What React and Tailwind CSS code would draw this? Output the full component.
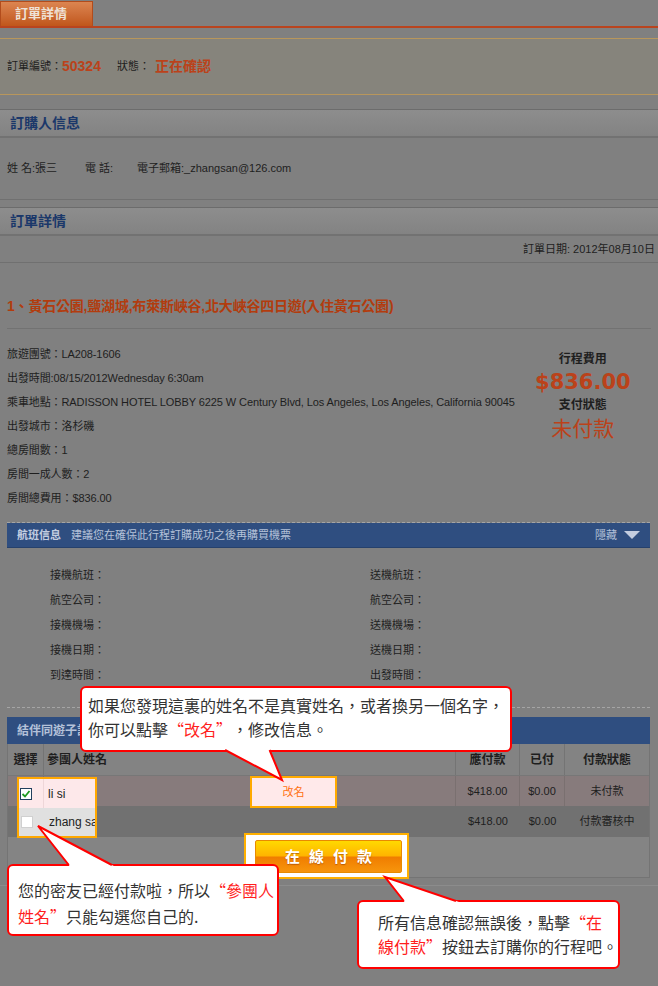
import React from 'react';

const tails = [
  { a: [227, 751], b: [270, 751], t: [282, 780] },
  { a: [68, 864], b: [110, 864], t: [38, 826] },
  { a: [403, 900], b: [453, 900], t: [385, 877] },
];

// push a base point along its edge so it ends `d` px inside the bubble
const ext = (p, t, d) => {
  const dy = p[1] - t[1];
  const k = (Math.abs(dy) + d) / Math.abs(dy);
  return [t[0] + (p[0] - t[0]) * k, t[1] + dy * k];
};
const pts = (arr) => arr.map((p) => p.join(',')).join(' ');

const Tail = ({ a, b, t }) => (
  <g>
    <polygon points={pts([ext(a, t, 5), t, ext(b, t, 5)])} fill="#fff" />
    <polyline points={pts([ext(a, t, 1), t, ext(b, t, 1)])} fill="none" stroke="#ff0000" strokeWidth="2" />
  </g>
);

const SectionHead = ({ title }) => (
  <div className="h-[29px] border-t border-[#6c6c6c] border-b-2 border-b-[#727272] bg-linear-to-b from-[#8d8d8d] to-[#838383] pl-[10px] text-[14px] font-bold leading-[26px] text-[#1b386a]">
    {title}
  </div>
);

const details = [
  '旅遊團號：LA208-1606',
  '出發時間:08/15/2012Wednesday 6:30am',
  '乘車地點：RADISSON HOTEL LOBBY 6225 W Century Blvd, Los Angeles, Los Angeles, California 90045',
  '出發城市：洛杉磯',
  '總房間數：1',
  '房間一成人數：2',
  '房間總費用：$836.00',
];

const flightRows = [
  ['接機航班：', '送機航班：'],
  ['航空公司：', '航空公司：'],
  ['接機機場：', '送機機場：'],
  ['接機日期：', '送機日期：'],
  ['到達時間：', '出發時間：'],
];

const Red = ({ children }) => <span className="text-[#ff1e1e]">{children}</span>;
// full-width quote marks, as the CJK fonts of the original draw them
const Open = () => <span className="inline-block w-[16px] text-right">“</span>;
const Close = () => <span className="inline-block w-[16px] text-left">”</span>;

export default function App() {
  return (
    <div className="relative w-[658px] h-[986px] overflow-hidden bg-[#808080] text-[#1e1e1e] font-['Liberation_Sans','Noto_Sans_CJK_TC',sans-serif]">
      {/* tab */}
      <div className="h-[28px] flex items-end border-b-2 border-[#b9441f]">
        <div className="h-[25px] w-[93px] bg-linear-to-b from-[#dc8550] to-[#c0561a] border border-b-0 border-[#b24c1c] pl-[14px] text-[13px] font-bold leading-[24px] text-[#efe2d6]">
          訂單詳情
        </div>
      </div>

      {/* order number */}
      <div className="mt-[10px] h-[57px] border-y border-[#b8965c] bg-[#86847c] flex items-center pl-[7px] text-[11px]">
        <span>訂單編號：</span>
        <span className="text-[14px] font-bold text-[#bb421a]">50324</span>
        <span className="ml-[16px]">狀態：</span>
        <span className="ml-[5px] text-[14px] font-bold text-[#bb421a]">正在確認</span>
      </div>

      {/* buyer */}
      <div className="mt-[14px]">
        <SectionHead title="訂購人信息" />
        <div className="h-[62px] border-b border-[#707070] flex items-center pl-[7px] text-[11px]">
          <span className="w-[78px]">姓 名:張三</span>
          <span className="w-[52px]">電 話:</span>
          <span>電子郵箱:_zhangsan@126.com</span>
        </div>
      </div>

      {/* order details */}
      <div className="mt-[7px]">
        <SectionHead title="訂單詳情" />
        <div className="h-[27px] border-b border-[#707070] flex items-center justify-end pr-[3px] text-[11px]">
          訂單日期: 2012年08月10日
        </div>
      </div>

      <div className="mt-[32px] h-[22px] pl-[7px] text-[14px] font-bold leading-[22px] tracking-[-0.2px] text-[#b23c0e] whitespace-nowrap">
        1、黃石公園,鹽湖城,布萊斯峽谷,北大峽谷四日遊(入住黃石公園)
      </div>
      <div className="mx-[7px] mt-[11px] border-t border-[#727272]" />

      <div className="mt-[13px] flex">
        <div className="pl-[7px] text-[11px] tracking-[-0.1px]">
          {details.map((d) => (
            <div key={d} className="h-[24px] leading-[24px] whitespace-nowrap">{d}</div>
          ))}
        </div>
        <div className="ml-auto mr-[7px] w-[140px] pt-[8px] flex flex-col items-center">
          <div className="leading-[18px] text-[12px] font-bold">行程費用</div>
          <div className="leading-[28px] text-[21px] font-bold text-[#bb421a] font-['DejaVu_Sans',sans-serif]">$836.00</div>
          <div className="leading-[18px] text-[12px] font-bold">支付狀態</div>
          <div className="leading-[26px] text-[21px] text-[#bb421a] font-['Noto_Sans_CJK_TC',sans-serif]">未付款</div>
        </div>
      </div>

      {/* flight info */}
      <div className="mt-[12px] ml-[7px] mr-[8px] border-t border-dashed border-[#a5a5a5] pb-[19px]">
        <div className="h-[25px] bg-[#2f4e80] border-b border-[#26416c] flex items-center pl-[10px] pr-[9px] text-[11px]">
          <span className="font-bold text-[#c3cde0]">航班信息</span>
          <span className="ml-[10px] text-[#b4c1d8]">建議您在確保此行程訂購成功之後再購買機票</span>
          <span className="ml-auto text-[#b4c1d8]">隱藏</span>
          <svg width="18" height="10" viewBox="0 0 18 10" className="ml-[6px]">
            <path d="M1 1 L17 1 L9 9 Z" fill="#c3cde0" />
          </svg>
        </div>
        <div className="pt-[15px] pl-[43px] grid grid-cols-[320px_1fr] text-[11px]">
          {flightRows.map(([l, r]) => (
            <React.Fragment key={l + r}>
              <div className="h-[25px] leading-[25px]">{l}</div>
              <div className="h-[25px] leading-[25px]">{r}</div>
            </React.Fragment>
          ))}
        </div>
      </div>

      {/* companions */}
      <div className="ml-[7px] mr-[8px] border-t border-dashed border-[#a5a5a5] pt-[9px]">
        <div className="h-[27px] bg-[#2f4e80] flex items-center pl-[10px] text-[12px] font-bold text-[#b5c2d9]">
          結伴同遊子訂單
        </div>
        <div className="border-x border-b border-[#747474]">
          <div className="h-[32px] flex bg-[#838383] border-b border-[#777] text-[12px] font-bold">
            <div className="w-[36px] border-r border-[#747474] flex items-center justify-center">選擇</div>
            <div className="flex-1 border-r border-[#747474] flex items-center pl-[3px]">參團人姓名</div>
            <div className="w-[64px] border-r border-[#747474] flex items-center justify-center">應付款</div>
            <div className="w-[45px] border-r border-[#747474] flex items-center justify-center">已付</div>
            <div className="w-[84px] flex items-center justify-center">付款狀態</div>
          </div>
          <div className="h-[30px] flex bg-[#877b7c] text-[11px]">
            <div className="w-[36px] border-r border-[#7a7070]" />
            <div className="flex-1 border-r border-[#7a7070]" />
            <div className="w-[64px] border-r border-[#7a7070] flex items-center justify-center">$418.00</div>
            <div className="w-[45px] border-r border-[#7a7070] flex items-center justify-center">$0.00</div>
            <div className="w-[84px] flex items-center justify-center">未付款</div>
          </div>
          <div className="h-[31px] flex bg-[#717171] text-[11px]">
            <div className="w-[36px]" />
            <div className="flex-1" />
            <div className="w-[64px] flex items-center justify-center">$418.00</div>
            <div className="w-[45px] flex items-center justify-center">$0.00</div>
            <div className="w-[84px] flex items-center justify-center">付款審核中</div>
          </div>
          <div className="h-[40px] bg-[#848484]" />
        </div>
      </div>
      <div className="mt-[7px] border-t border-[#8c8c8c]" />

      {/* highlighted spots */}
      <div className="absolute left-[250px] top-[776px] w-[87px] h-[32px] border-2 border-[#ffaa00] bg-[#ffe9ea] z-10 flex items-center justify-center text-[11px] text-[#ff7010]">
        改名
      </div>

      <div className="absolute left-[17px] top-[777px] w-[80px] h-[61px] border-2 border-[#ffa800] z-10 overflow-hidden text-[12px] text-[#222]">
        <div className="h-[29px] bg-[#fde8ea] flex">
          <div className="w-[25px] shrink-0 border-r border-[#eed6d8] flex items-center pl-[1px]">
            <div className="w-[12px] h-[12px] bg-white border border-[#23405e] flex items-center justify-center">
              <svg width="10" height="10" viewBox="0 0 10 10">
                <path d="M1.5 5 L4 7.5 L8.5 2" fill="none" stroke="#1f9a1f" strokeWidth="1.8" />
              </svg>
            </div>
          </div>
          <div className="pl-[4px] flex items-center whitespace-nowrap">li si</div>
        </div>
        <div className="h-[28px] bg-[#e0e0e0] flex">
          <div className="w-[25px] shrink-0 flex items-center pl-[2px]">
            <div className="w-[12px] h-[12px] bg-white border border-[#d0d0d0]" />
          </div>
          <div className="pl-[5px] shrink-0 flex items-center whitespace-nowrap">zhang san</div>
        </div>
      </div>

      <div className="absolute left-[244px] top-[833px] w-[165px] h-[46px] border-2 border-[#ffb000] bg-white z-10 pl-[9px] pt-[5px]">
        <div className="w-[147px] h-[33px] rounded-[2px] border border-[#e88a00] bg-[linear-gradient(#ffd900,#ffb400_48%,#f07d00_52%,#f7950c)] flex items-center justify-center text-[15px] font-bold text-white tracking-[9px] [text-shadow:0_1px_1px_rgba(150,60,0,0.6)] font-['Noto_Sans_CJK_TC',sans-serif]">
          <span className="mr-[-9px]">在線付款</span>
        </div>
      </div>

      {/* callouts */}
      <div className="absolute left-[80px] top-[686px] w-[432px] h-[66px] bg-white border-2 border-[#ff0000] rounded-[6px] z-20 pl-[6px] pt-[5px] text-[16px] leading-[24px] text-[#333] whitespace-nowrap font-['Noto_Sans_CJK_TC',sans-serif]">
        <div>如果您發現這裏的姓名不是真實姓名，或者換另一個名字，</div>
        <div>你可以點擊<Red><Open />改名<Close /></Red>，修改信息。</div>
      </div>

      <div className="absolute left-[7px] top-[864px] w-[272px] h-[72px] bg-white border-2 border-[#ff0000] rounded-[6px] z-20 pl-[9px] pt-[11px] text-[16px] leading-[26px] text-[#333] whitespace-nowrap font-['Noto_Sans_CJK_TC',sans-serif]">
        <div>您的密友已經付款啦，所以<Red><Open />參團人</Red></div>
        <div><Red>姓名<Close /></Red>只能勾選您自己的.</div>
      </div>

      <div className="absolute left-[357px] top-[900px] w-[263px] h-[69px] bg-white border-2 border-[#ff0000] rounded-[6px] z-20 pl-[19px] pt-[8px] text-[16px] leading-[24px] text-[#333] whitespace-nowrap font-['Noto_Sans_CJK_TC',sans-serif]">
        <div>所有信息確認無誤後，點擊<Red><Open />在</Red></div>
        <div><Red>線付款<Close /></Red>按鈕去訂購你的行程吧。</div>
      </div>

      <svg className="absolute inset-0 z-30 pointer-events-none" width="658" height="986">
        {tails.map((t, i) => (
          <Tail key={i} {...t} />
        ))}
      </svg>
    </div>
  );
}
